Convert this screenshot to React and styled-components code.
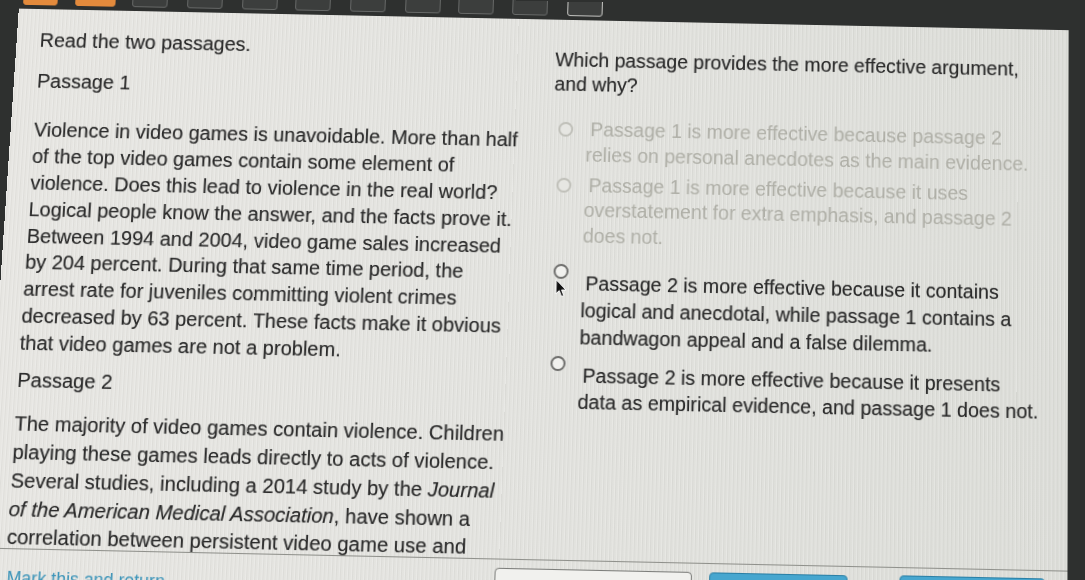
import React from "react";
import styled, { createGlobalStyle } from "styled-components";

const Global = createGlobalStyle`
  html, body { margin: 0; padding: 0; background: #2f3130; }
  body { font-family: "Liberation Sans", Arial, sans-serif; color: #2a2a2a; }
`;

const Screen = styled.div`
  width: 1085px;
  height: 580px;
  overflow: hidden;
  background: #2e302f;
`;

/* The reference is a photo of a monitor: the whole page is drawn flat
   and then tilted a little (perspective + a slight clockwise turn). */
const Stage = styled.div`
  width: 1085px;
  display: flex;
  flex-direction: column;
  transform-origin: 760px 290px;
  transform: perspective(1000px) rotateX(3.5deg) rotate(1.2deg);
`;

const TopBar = styled.div`
  height: 18.5px;
  flex: none;
  display: flex;
  align-items: flex-end;
  padding: 0 0 3.5px 4px;
  box-sizing: border-box;
  overflow: hidden;
`;

const Tool = styled.div`
  flex: none;
  width: ${(p) => p.$w || 36}px;
  height: 24px;
  margin-left: ${(p) => p.$gap || 0}px;
  border-radius: 3px;
  box-sizing: border-box;
  position: relative;
  background: ${(p) => (p.$orange ? "#e38a3c" : "#3c3e3d")};
  border: 1px solid
    ${(p) => (p.$orange ? "#e38a3c" : p.$active ? "#c9c9c6" : "#676968")};
`;

const Panel = styled.div`
  flex: none;
  height: 591.5px;
  margin-right: 17px;
  display: flex;
  flex-direction: column;
  background:
    repeating-linear-gradient(
      90deg,
      rgba(255, 255, 255, 0.22) 0 1px,
      rgba(0, 0, 0, 0.035) 1px 2px,
      transparent 2px 4px
    ),
    linear-gradient(90deg, #e7e6e2 0%, #e3e3df 45%, #dcddd8 100%);
`;

const Content = styled.div`
  flex: none;
  height: 541.5px;
  overflow: hidden;
  display: grid;
  grid-template-columns: 524px 1fr;
  padding-left: 23.5px;
`;

const LeftCol = styled.div`
  display: flex;
  flex-direction: column;
`;

const Line = styled.p`
  margin: ${(p) => p.$mt || 0}px 0 0 0;
  font-size: 20px;
  line-height: ${(p) => p.$lh || 26}px;
  color: #2a2a2a;
  text-shadow: 0 0 0.7px rgba(0, 0, 0, 0.35);
  white-space: nowrap;
`;

const Em = styled.i`
  font-style: italic;
`;

const RightCol = styled.div`
  position: relative;
  display: flex;
  flex-direction: column;
  padding-top: 29.85px;
`;

const Question = styled.p`
  margin: 0;
  font-size: 19.7px;
  line-height: 24.7px;
  color: #2a2a2a;
  text-shadow: 0 0 0.7px rgba(0, 0, 0, 0.35);
  white-space: nowrap;
`;

const Option = styled.div`
  display: flex;
  align-items: flex-start;
  margin-top: ${(p) => p.$mt}px;
  padding-left: 5.2px;
`;

const Radio = styled.span`
  flex: none;
  width: 15px;
  height: 15px;
  margin-top: ${(p) => (p.$faded ? (p.$lh - 15) / 2 : -5.8)}px;
  border-radius: 50%;
  box-sizing: border-box;
  border: 2px solid ${(p) => (p.$faded ? "#bfbfb8" : "#6e6e6c")};
  background: ${(p) => (p.$faded ? "#e6e6e2" : "#f1f1ee")};
`;

const Label = styled.div`
  margin-left: 13.5px;
  text-indent: 4px;
  font-size: 19.6px;
  line-height: ${(p) => p.$lh}px;
  color: ${(p) => (p.$faded ? "#afafa7" : "#2a2a2a")};
  text-shadow: ${(p) =>
    p.$faded ? "none" : "0 0 0.7px rgba(0, 0, 0, 0.35)"};
  white-space: nowrap;
`;

const Cursor = styled.svg`
  position: absolute;
  left: 7.7px;
  top: 264.7px;
  width: 12px;
  height: 19px;
`;

const Footer = styled.div`
  flex: 1;
  border-top: 1px solid #8f908b;
  display: flex;
  align-items: flex-start;
  padding-left: 25.8px;
  overflow: hidden;
`;

const MarkLink = styled.span`
  margin-top: 17.5px;
  font-size: 17.5px;
  line-height: 20px;
  color: #3a93b8;
  white-space: nowrap;
  width: 479.5px;
  flex: none;
`;

const FootButton = styled.div`
  flex: none;
  width: ${(p) => p.$w}px;
  height: 36px;
  margin-top: ${(p) => p.$mt}px;
  margin-left: ${(p) => p.$ml}px;
  border-radius: 4px;
  box-sizing: border-box;
  border: 1px solid ${(p) => (p.$primary ? "#2a7fa5" : "#7c7d7a")};
  background: ${(p) => (p.$primary ? "#46a6cf" : "#f1f1ee")};
`;

const passage1 = [
  "Violence in video games is unavoidable. More than half",
  "of the top video games contain some element of",
  "violence. Does this lead to violence in the real world?",
  "Logical people know the answer, and the facts prove it.",
  "Between 1994 and 2004, video game sales increased",
  "by 204 percent. During that same time period, the",
  "arrest rate for juveniles committing violent crimes",
  "decreased by 63 percent. These facts make it obvious",
  "that video games are not a problem.",
];

export default function App() {
  return (
    <>
      <Global />
      <Screen>
        <Stage>
          <TopBar>
            <Tool $orange $w={34.6} />
            <Tool $orange $w={40.6} $gap={18.4} />
            <Tool $gap={17.1} />
            <Tool $gap={20} />
            <Tool $gap={20.2} />
            <Tool $gap={17.9} />
            <Tool $gap={20} />
            <Tool $gap={20} />
            <Tool $gap={17.9} />
            <Tool $gap={18.9} />
            <Tool $active $gap={20} />
          </TopBar>
          <Panel>
            <Content>
              <LeftCol>
                <Line $mt={19.5}>Read the two passages.</Line>
                <Line $mt={15.8}>Passage 1</Line>
                <Line $mt={24.27} $lh={26.86}>
                  {passage1.map((l, i) => (
                    <React.Fragment key={i}>
                      {l}
                      {i < passage1.length - 1 && <br />}
                    </React.Fragment>
                  ))}
                </Line>
                <Line $mt={9.9}>Passage 2</Line>
                <Line $mt={17.45} $lh={27.8}>
                  The majority of video games contain violence. Children
                  <br />
                  playing these games leads directly to acts of violence.
                  <br />
                  Several studies, including a 2014 study by the{" "}
                  <Em>Journal</Em>
                  <br />
                  <Em>of the American Medical Association</Em>, have shown a
                  <br />
                  correlation between persistent video game use and
                </Line>
              </LeftCol>
              <RightCol>
                <Question>
                  Which passage provides the more effective argument,
                  <br />
                  and why?
                </Question>
                <Option $mt={21.25}>
                  <Radio $faded $lh={25.6} />
                  <Label $faded $lh={25.6}>
                    Passage 1 is more effective because passage 2
                    <br />
                    relies on personal anecdotes as the main evidence.
                  </Label>
                </Option>
                <Option $mt={5.9}>
                  <Radio $faded $lh={25.35} />
                  <Label $faded $lh={25.35}>
                    Passage 1 is more effective because it uses
                    <br />
                    overstatement for extra emphasis, and passage 2
                    <br />
                    does not.
                  </Label>
                </Option>
                <Option $mt={21.4}>
                  <Radio />
                  <Label $lh={27.25}>
                    Passage 2 is more effective because it contains
                    <br />
                    logical and anecdotal, while passage 1 contains a
                    <br />
                    bandwagon appeal and a false dilemma.
                  </Label>
                </Option>
                <Option $mt={10.35}>
                  <Radio />
                  <Label $lh={26.3}>
                    Passage 2 is more effective because it presents
                    <br />
                    data as empirical evidence, and passage 1 does not.
                  </Label>
                </Option>
                <Cursor viewBox="0 0 12 19">
                  <path
                    d="M1 1 L1 15 L4.3 11.8 L6.6 17.6 L8.9 16.7 L6.6 11.1 L11 11.1 Z"
                    fill="#111"
                    stroke="#fff"
                    strokeWidth="1"
                    strokeLinejoin="round"
                  />
                </Cursor>
              </RightCol>
            </Content>
            <Footer>
              <MarkLink>Mark this and return</MarkLink>
              <FootButton $w={193.6} $ml={0} $mt={7.5} />
              <FootButton $primary $w={136.6} $ml={16.9} $mt={7.5} />
              <FootButton $primary $w={142.5} $ml={51.1} $mt={6.5} />
            </Footer>
          </Panel>
        </Stage>
      </Screen>
    </>
  );
}
